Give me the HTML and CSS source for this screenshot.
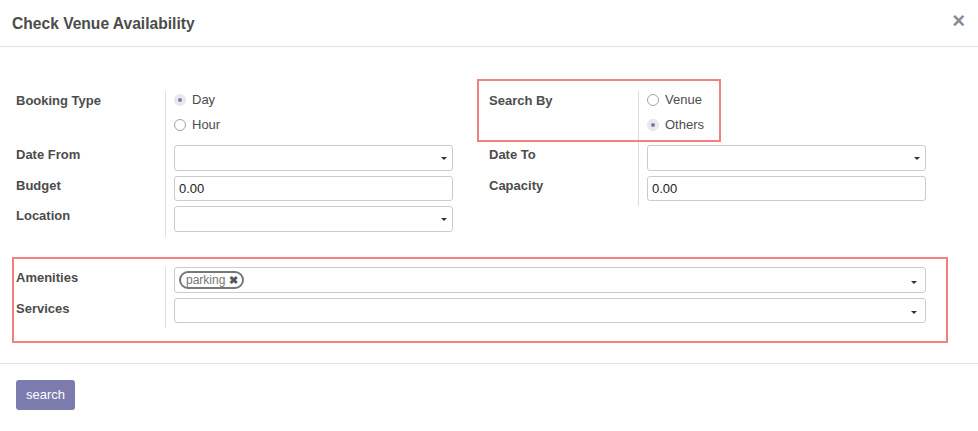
FILE: index.html
```html
<!DOCTYPE html>
<html>
<head>
<meta charset="utf-8">
<link rel="stylesheet" href="styles.css">
</head>
<body>
<div class="modal">
  <header class="modal-header">
    <h4 class="title">Check Venue Availability</h4>
    <span class="close">×</span>
  </header>
  <div class="modal-body">
    <div class="group-top">
      <div class="col">
        <div class="row">
          <div class="lbl">Booking Type</div>
          <div class="val radios">
            <div class="radio"><span class="dot checked"></span>Day</div>
            <div class="radio"><span class="dot"></span>Hour</div>
          </div>
        </div>
        <div class="row">
          <div class="lbl">Date From</div>
          <div class="val"><div class="field select"><span class="caret"></span></div></div>
        </div>
        <div class="row">
          <div class="lbl">Budget</div>
          <div class="val"><div class="field input">0.00</div></div>
        </div>
        <div class="row">
          <div class="lbl">Location</div>
          <div class="val"><div class="field select"><span class="caret"></span></div></div>
        </div>
      </div>
      <div class="col">
        <div class="row marked">
          <div class="lbl">Search By</div>
          <div class="val radios">
            <div class="radio"><span class="dot"></span>Venue</div>
            <div class="radio"><span class="dot checked"></span>Others</div>
          </div>
        </div>
        <div class="row">
          <div class="lbl">Date To</div>
          <div class="val"><div class="field select"><span class="caret"></span></div></div>
        </div>
        <div class="row">
          <div class="lbl">Capacity</div>
          <div class="val"><div class="field input">0.00</div></div>
        </div>
      </div>
    </div>
    <div class="group-amen">
      <div class="row">
        <div class="lbl lbl-amen">Amenities</div>
        <div class="val"><div class="field select wide"><span class="tag">parking <b class="tag-x">✖</b></span><span class="caret caret-wide"></span></div></div>
      </div>
      <div class="row">
        <div class="lbl lbl-amen">Services</div>
        <div class="val"><div class="field select wide short"><span class="caret caret-wide"></span></div></div>
      </div>
    </div>
  </div>
  <footer class="modal-footer">
    <button class="btn">search</button>
  </footer>
</div>
</body>
</html>
```
FILE: styles.css
```css
html, body {
  margin: 0;
  padding: 0;
  background: #fff;
}
body {
  font-family: "Liberation Sans", Arial, sans-serif;
  font-size: 13px;
  color: #4c4c4c;
}
.modal {
  width: 978px;
}
.modal-header {
  height: 46px;
  border-bottom: 1px solid #e2e2e6;
  display: flex;
  align-items: center;
  justify-content: space-between;
  padding: 0 12px;
}
.title {
  margin: 2px 0 0 0;
  font-size: 15.6px;
  font-weight: bold;
  color: #4c4c4c;
}
.close {
  font-size: 22px;
  font-weight: bold;
  color: #8a8a92;
  line-height: 1;
  margin-right: 1px;
  margin-top: -5px;
}
.modal-body {
  padding: 44px 16px 20px 16px;
}
.group-top {
  display: flex;
  gap: 36px;
}
.col {
  width: 437px;
}
.row {
  display: flex;
  position: relative;
}
.lbl {
  width: 149px;
  flex: none;
  font-weight: bold;
  line-height: 18px;
  padding-top: 1px;
  box-sizing: border-box;
}
.lbl-amen {
  padding-top: 2px;
}
.val {
  border-left: 1px solid #ddd;
  padding: 0 0 5px 8px;
  flex: 1;
}
.radios {
  padding-bottom: 11px;
  display: flex;
  flex-direction: column;
  gap: 7px;
}
.radio {
  display: flex;
  align-items: center;
  line-height: 18px;
}
.dot {
  width: 10px;
  height: 10px;
  border: 1px solid #a2a2ae;
  border-radius: 50%;
  margin-right: 6px;
  position: relative;
  background: #fff;
}
.dot.checked {
  border-color: #e6e6ec;
  background: #e9e9ef;
}
.dot.checked::after {
  content: "";
  position: absolute;
  left: 3px;
  top: 3px;
  width: 4px;
  height: 4px;
  border-radius: 50%;
  background: #7c7bad;
}
.field {
  box-sizing: border-box;
  width: 279px;
  height: 26px;
  border: 1px solid #ccc;
  border-radius: 3px;
  position: relative;
  display: flex;
  align-items: center;
  padding-left: 4px;
  color: #222;
}
.field.input {
  height: 25px;
}
.field.wide {
  width: 752px;
}
.field.short {
  height: 25px;
}
.caret {
  position: absolute;
  right: 5px;
  top: 11px;
  width: 0;
  height: 0;
  border-left: 3px solid transparent;
  border-right: 3px solid transparent;
  border-top: 3px solid #333;
}
.caret-wide {
  right: 8px;
  top: 13px;
}
.field.short .caret-wide {
  top: 12px;
}
.tag {
  box-sizing: border-box;
  height: 18px;
  border: 2px solid #777;
  border-radius: 9px;
  padding: 0 4px 0 5px;
  color: #777;
  font-size: 12px;
  line-height: 14px;
  display: flex;
  align-items: center;
  gap: 4px;
}
.tag-x {
  color: #555;
  font-size: 11px;
}
.marked::before {
  content: "";
  position: absolute;
  left: -12px;
  top: -12px;
  width: 244px;
  height: 63px;
  box-sizing: border-box;
  border: 2px solid #f47f7f;
  pointer-events: none;
}
.group-amen {
  margin: 20px 0 0 -4px;
  width: 910px;
  border: 2px solid #f47f7f;
  padding: 8px 20px 13px 2px;
}
.modal-footer {
  border-top: 1px solid #e2e2e6;
  padding: 16px;
}
.btn {
  width: 59px;
  height: 30px;
  border: none;
  border-radius: 3px;
  background: #7c7bad;
  color: #fff;
  font-family: "Liberation Sans", Arial, sans-serif;
  font-size: 13px;
  padding: 0 0 1px 0;
}
```
